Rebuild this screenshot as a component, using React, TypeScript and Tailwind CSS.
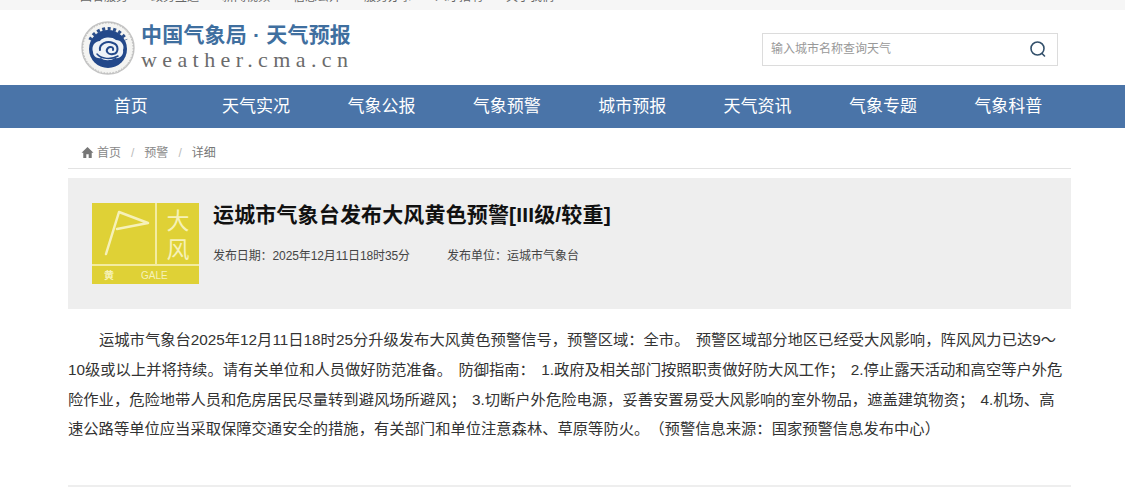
const F = { fontFamily: '"Liberation Sans","Noto Sans CJK SC",sans-serif' };

const nav = ["首页", "天气实况", "气象公报", "气象预警", "城市预报", "天气资讯", "气象专题", "气象科普"];
const top = ["国省服务", "政务互通", "新闻视频", "信息公开", "服务办事", "人才招聘", "关于我们"];

function Logo() {
  return (
    <svg width="54" height="54" viewBox="0 0 54 54" className="shrink-0">
      <circle cx="27" cy="27" r="26" fill="#f4f4f2" stroke="#c4c4c4" strokeWidth="1.4" />
      <circle cx="27" cy="27" r="25" fill="none" stroke="#9a9a9a" strokeWidth="0.6" strokeDasharray="1.5 1.5" />
      <path d="M9 19 A20 20 0 0 1 45 19" fill="none" stroke="#2d4f8a" strokeWidth="3.4" strokeDasharray="3 2.5" />
      <circle cx="27" cy="28" r="19" fill="#23488a" />
      <path d="M12 31c-2-6 2-11 7-11 2-4 12-5 16-1 5 0 9 5 7 10 1 5-3 9-8 8-4 3-11 3-14 0-4 1-8-2-8-6z" fill="#eef2f7" />
      <path d="M19 29c-1-6 7-10 13-7 6 2 6 10 0 11-5 1-8-3-5-6 2-2 6-1 5 2" fill="none" stroke="#23488a" strokeWidth="2" strokeLinecap="round" />
      <path d="M16 33c4 5 14 6 21 2" fill="none" stroke="#23488a" strokeWidth="1.5" strokeLinecap="round" />
    </svg>
  );
}

function Badge() {
  return (
    <div className="w-[107px] h-[81px] bg-[#dfd136] flex flex-col shrink-0">
      <div className="flex h-[61px]">
        <div className="w-[65px] border-r-2 border-[#f3eca0] relative">
          <svg width="63" height="61" viewBox="0 0 63 61" className="absolute inset-0">
            <path d="M14 51 L27 9 L56 20 L25 26" fill="none" stroke="#f6f1b8" strokeWidth="2.5" strokeLinejoin="round" strokeLinecap="round" />
          </svg>
        </div>
        <div className="flex-1 flex flex-col items-center pt-[5px] text-[#f6f1b8] text-[23px] leading-[26px]">
          <span>大</span>
          <span className="mt-[3px]">风</span>
        </div>
      </div>
      <div className="h-[2px] bg-[#f3eca0]" />
      <div className="flex-1 flex items-center text-[#f6f1b8] text-[10px]">
        <span className="ml-[12px] font-bold">黄</span>
        <span className="ml-[27px]">GALE</span>
      </div>
    </div>
  );
}

export default function App() {
  return (
    <div style={F} className="w-[1125px] h-[489px] bg-white overflow-hidden flex flex-col">
      <div className="h-[10px] bg-[#f6f6f6] overflow-hidden shrink-0">
        <div className="flex pl-[80px] gap-[23px] -mt-[11px] text-[12px] leading-[16px] text-[#666]">
          {top.map((t) => (
            <span key={t} className="w-[48px] whitespace-nowrap">{t}</span>
          ))}
        </div>
      </div>
      <header className="h-[75px] shrink-0 flex items-center pl-[81px] pr-[67px]">
        <Logo />
        <div className="ml-[6px] flex flex-col mt-[-1px]">
          <span className="text-[21px] leading-[26px] font-bold text-[#3f6f9f] tracking-[0.2px]">中国气象局 · 天气预报</span>
          <span style={{ fontFamily: '"Liberation Serif",serif' }} className="text-[22px] leading-[24px] text-[#6b6b6b] tracking-[5.4px] whitespace-nowrap">weather.cma.cn</span>
        </div>
        <div className="ml-auto w-[296px] h-[33px] border border-[#dcdcdc] flex items-center pl-[8px] pr-[10px] mt-[3px]">
          <span className="text-[12px] text-[#999]">输入城市名称查询天气</span>
          <svg width="18" height="18" viewBox="0 0 18 18" className="ml-auto" fill="none" stroke="#33506b" strokeWidth="1.6">
            <circle cx="8.5" cy="8.5" r="6.5" />
            <path d="M13 13.5l2.5 2.5" strokeLinecap="round" />
          </svg>
        </div>
      </header>
      <nav className="h-[43px] shrink-0 bg-[#4a74a8] flex items-center pl-[68px] pr-[54px] text-white text-[17px]">
        {nav.map((n) => (
          <span key={n} className="w-[125.4px] text-center">{n}</span>
        ))}
      </nav>
      <div className="ml-[68px] mr-[54px] h-[41px] border-b border-[#e3e3e3] flex items-center pl-[13px] pt-[9px] text-[12px] text-[#888] shrink-0">
        <svg width="13" height="13" viewBox="0 0 12 12" fill="#777" className="mr-[3px]">
          <path d="M6 1L0.5 6.2h1.6V11h2.8V7.6h2.2V11h2.8V6.2h1.6z" />
        </svg>
        <span>首页</span>
        <span className="mx-[10px] text-[#bbb]">/</span>
        <span>预警</span>
        <span className="mx-[10px] text-[#bbb]">/</span>
        <span className="text-[#777]">详细</span>
      </div>
      <section className="ml-[68px] mr-[54px] mt-[9px] h-[131px] bg-[#eeeeee] flex items-center pl-[24px] shrink-0">
        <Badge />
        <div className="ml-[14px] flex flex-col mt-[-17px]">
          <h1 className="text-[21px] leading-[28px] font-bold text-[#111] mt-[-4px] tracking-[0.15px]">运城市气象台发布大风黄色预警[III级/较重]</h1>
          <div className="flex mt-[18px] text-[12px] leading-[18px] text-[#444]">
            <span className="w-[234px] tracking-[-0.1px]">发布日期：2025年12月11日18时35分</span>
            <span>发布单位：运城市气象台</span>
          </div>
        </div>
      </section>
      <p className="ml-[68px] w-[995px] mt-[16px] text-[15.3px] leading-[29.8px] text-[#333] indent-[31px] [word-spacing:2px] [text-spacing-trim:space-all]">
        运城市气象台2025年12月11日18时25分升级发布大风黄色预警信号，预警区域：全市。 预警区域部分地区已经受大风影响，阵风风力已达9～10级或以上并将持续。请有关单位和人员做好防范准备。 防御指南： 1.政府及相关部门按照职责做好防大风工作； 2.停止露天活动和高空等户外危险作业，危险地带人员和危房居民尽量转到避风场所避风； 3.切断户外危险电源，妥善安置易受大风影响的室外物品，遮盖建筑物资； 4.机场、高速公路等单位应当采取保障交通安全的措施，有关部门和单位注意森林、草原等防火。（预警信息来源：国家预警信息发布中心）
      </p>
      <div className="ml-[68px] mr-[54px] mt-[41px] border-t-2 border-[#eeeeee]" />
    </div>
  );
}
